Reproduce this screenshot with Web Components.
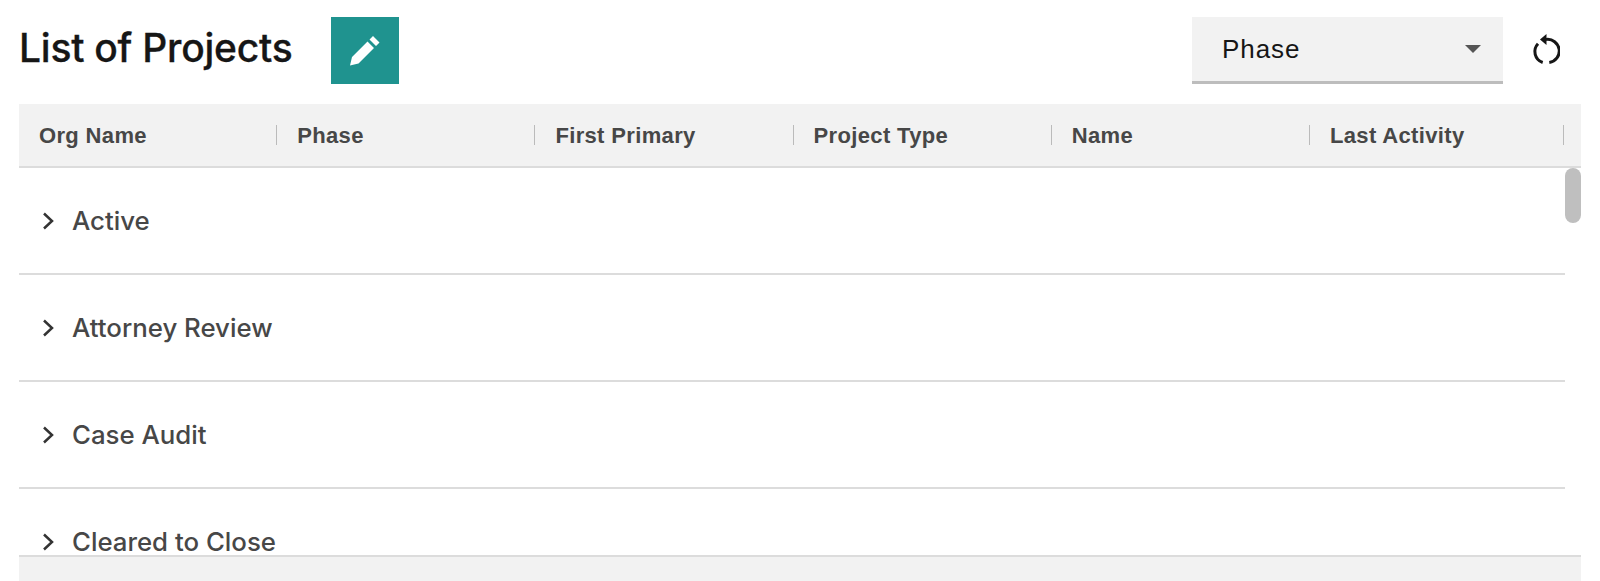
<!DOCTYPE html>
<html>
<head>
<meta charset="utf-8">
<title>List of Projects</title>
<style>
  html, body { margin: 0; height: 100%; background: #fff; overflow: hidden; }
  body { font-family: "Liberation Sans", Arial, sans-serif; }
</style>
</head>
<body>
<x-app></x-app>
<script>
class Toolbar extends HTMLElement {
  constructor() {
    super();
    this.attachShadow({mode: 'open'}).innerHTML = `
      <style>
        :host { display: flex; align-items: flex-start; height: 104px; padding: 17px 19px 0; box-sizing: border-box; }
        h1 { margin: 0; width: 312px; font-family: Inter, "Liberation Sans", sans-serif; font-size: 39px; line-height: 62px; font-weight: 500; letter-spacing: -.25px; color: #161616; -webkit-text-stroke: .3px #161616; }
        button { width: 68px; height: 67px; border: 0; padding: 0; background: #1f938f; display: flex; align-items: center; justify-content: center; }
        .spacer { flex: 1; }
        .select { width: 311px; height: 67px; box-sizing: border-box; background: #f2f2f2; border-bottom: 3px solid #bdbdbd; display: flex; align-items: center; padding: 0 22px 0 30px; font-size: 26px; letter-spacing: .95px; color: #161616; }
        .select span { flex: 1; }
        .refresh { width: 78px; height: 67px; box-sizing: border-box; display: flex; align-items: center; padding-left: 29px; }
      </style>
      <h1>List of Projects</h1>
      <button aria-label="Edit">
        <svg width="32" height="32" viewBox="0 0 32 32"><path fill="#fff" d="M1 30.500 3 22 18.500 6.500 25 13 9.500 28.500ZM20.500 4.500 24 1 30.500 7.500 27 11Z"/></svg>
      </button>
      <div class="spacer"></div>
      <div class="select"><span>Phase</span>
        <svg width="16" height="8" viewBox="0 0 16 8"><path fill="#555" d="M0 0h16L8 8z"/></svg>
      </div>
      <div class="refresh">
        <svg width="28" height="36" viewBox="0 0 28 36" fill="none" stroke="#161616" stroke-width="3">
          <path d="M6 10.700A11.500 11.500 0 0 0 10.700 29.500"/>
          <path d="M17.300 29.500A11.500 11.500 0 0 0 14 6.500"/>
          <path fill="#161616" stroke="none" d="M14.500 1V12L8 6.500Z"/>
        </svg>
      </div>`;
  }
}

class TableHead extends HTMLElement {
  constructor() {
    super();
    const cols = ['Org Name', 'Phase', 'First Primary', 'Project Type', 'Name', 'Last Activity'];
    this.attachShadow({mode: 'open'}).innerHTML = `
      <style>
        :host { display: grid; grid-template-columns: repeat(5, 258.2px) 254.5px 1fr; height: 62px; background: #f2f2f2; border-bottom: 2px solid #dcdcdc; }
        div { display: flex; align-items: center; justify-content: space-between; padding: 2px 0 0 20px; font-size: 22px; font-weight: 700; letter-spacing: .35px; color: #474747; }
        i { width: 1px; height: 20px; background: #bbb; margin-top: -2px; }
      </style>
      ${cols.map(c => `<div><span>${c}</span><i></i></div>`).join('')}`;
  }
}

class GroupRow extends HTMLElement {
  constructor() {
    super();
    this.attachShadow({mode: 'open'}).innerHTML = `
      <style>
        :host { display: flex; align-items: center; height: 105px; border-bottom: 2px solid #dcdcdc; margin-right: 16px; padding-left: 23px; gap: 16px; font-family: Inter, "Liberation Sans", sans-serif; font-weight: 500; font-size: 25.800px; color: #474747; }
        svg { flex: none; }
      </style>
      <svg width="14" height="18" viewBox="0 0 14 18" fill="none" stroke="#333" stroke-width="2.500"><path d="M2 1.500 10 9 2 16.500"/></svg>
      <slot></slot>`;
  }
}

class App extends HTMLElement {
  constructor() {
    super();
    this.attachShadow({mode: 'open'}).innerHTML = `
      <style>
        :host { display: flex; flex-direction: column; height: 581px; }
        .table { margin: 0 19px; flex: 1; display: flex; flex-direction: column; min-height: 0; }
        .body { flex: 1; min-height: 0; overflow: hidden; position: relative; }
        .thumb { position: absolute; top: 0; right: 0; width: 16px; height: 55px; border-radius: 8px; background: #bfbfbf; }
        .foot { height: 24px; background: #f2f2f2; border-top: 2px solid #dcdcdc; }
      </style>
      <x-toolbar></x-toolbar>
      <div class="table">
        <x-table-head></x-table-head>
        <div class="body">
          <x-group-row>Active</x-group-row>
          <x-group-row>Attorney Review</x-group-row>
          <x-group-row>Case Audit</x-group-row>
          <x-group-row>Cleared to Close</x-group-row>
          <div class="thumb"></div>
        </div>
        <div class="foot"></div>
      </div>`;
  }
}

customElements.define('x-toolbar', Toolbar);
customElements.define('x-table-head', TableHead);
customElements.define('x-group-row', GroupRow);
customElements.define('x-app', App);
</script>
</body>
</html>
